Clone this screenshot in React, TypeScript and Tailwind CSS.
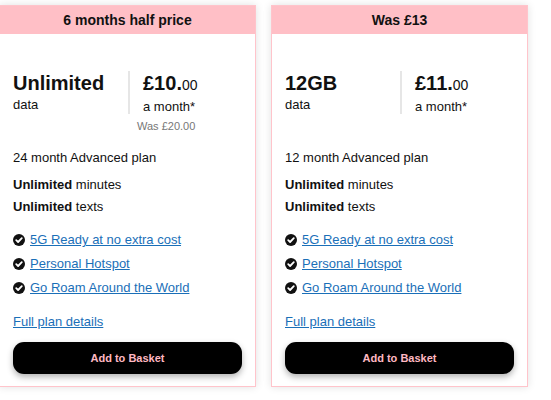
import React from 'react';

type Plan = {
  badge: string;
  data: string;
  pounds: string;
  was?: string;
  term: string;
};

const plans: Plan[] = [
  { badge: '6 months half price', data: 'Unlimited', pounds: '£10', was: 'Was £20.00', term: '24 month Advanced plan' },
  { badge: 'Was £13', data: '12GB', pounds: '£11', term: '12 month Advanced plan' },
];

const perks = ['5G Ready at no extra cost', 'Personal Hotspot', 'Go Roam Around the World'];

function CheckDot() {
  return (
    <svg width="12" height="12" viewBox="0 0 12 12" className="shrink-0">
      <circle cx="6" cy="6" r="6" fill="#111" />
      <path d="M3.2 6.2 5.1 8 8.8 4.2" fill="none" stroke="#fff" strokeWidth="1.8" strokeLinecap="round" strokeLinejoin="round" />
    </svg>
  );
}

function PlanCard({ plan }: { plan: Plan }) {
  return (
    <div className="w-[257px] h-[382px] border border-[#ffc4cb] bg-white shadow-[0_0_8px_rgba(0,0,0,0.12)] flex flex-col">
      <div className="h-[28px] bg-[#ffbfc6] flex items-center justify-center text-[14px] font-bold text-[#111]">
        {plan.badge}
      </div>
      <div className="px-[13px] flex flex-col flex-1">
        <div className="flex mt-[37px]">
          <div className="w-[115px] flex flex-col">
            <span className="text-[20px] leading-[24px] font-bold text-[#111]">{plan.data}</span>
            <span className="text-[13px] leading-[18px] mt-[1px] text-[#111]">data</span>
          </div>
          <div className="w-[2px] h-[43px] bg-[#e6e6e6]" />
          <div className="pl-[13px] flex flex-col">
            <span className="text-[20px] leading-[24px] font-bold text-[#111]">
              {plan.pounds}.<span className="text-[14px] font-normal">00</span>
            </span>
            <span className="text-[13px] leading-[18px] mt-[1px] text-[#111]">a month*</span>
          </div>
        </div>
        <div className="h-[17px] mt-[2px] pl-[124px] text-[11px] leading-[17px] text-[#777]">{plan.was}</div>
        <div className="mt-[14px] text-[13px] leading-[18px] text-[#111]">{plan.term}</div>
        <div className="mt-[7px] text-[13px] leading-[22px] text-[#111]">
          <div><span className="font-bold">Unlimited</span> minutes</div>
          <div><span className="font-bold">Unlimited</span> texts</div>
        </div>
        <div className="mt-[13px] flex flex-col gap-[7px]">
          {perks.map(p => (
            <div key={p} className="flex items-center gap-[5px] h-[17px]">
              <CheckDot />
              <a className="text-[13px] leading-[17px] text-[#1a6fb8] underline">{p}</a>
            </div>
          ))}
        </div>
        <a className="mt-[17px] text-[13px] leading-[17px] text-[#1a6fb8] underline">Full plan details</a>
        <button className="mt-[12px] h-[32px] w-full rounded-[11px] bg-black text-[#ffb8c2] text-[11px] font-bold shadow-[0_3px_6px_rgba(0,0,0,0.3)]">
          Add to Basket
        </button>
      </div>
    </div>
  );
}

export default function App() {
  return (
    <div className="w-[551px] h-[400px] bg-white overflow-hidden" style={{ fontFamily: '"Liberation Sans", Arial, sans-serif' }}>
      <div className="flex gap-[15px] ml-[-1px] mt-[5px]">
        {plans.map(p => (
          <PlanCard key={p.badge} plan={p} />
        ))}
      </div>
    </div>
  );
}
